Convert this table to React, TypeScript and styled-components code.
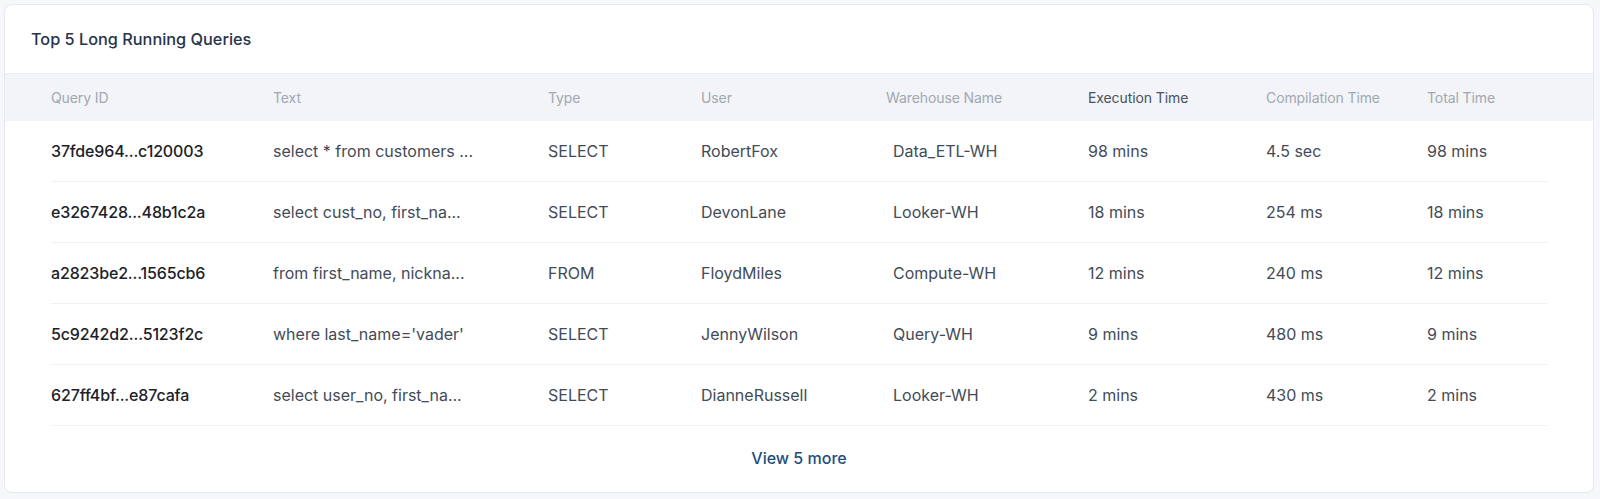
import styled, { createGlobalStyle } from "styled-components";

const GlobalStyle = createGlobalStyle`
  html, body {
    margin: 0;
    padding: 0;
    background: #f6f7fb;
    font-family: Inter, "Noto Sans", sans-serif;
  }
`;

const Page = styled.div`
  padding: 4px 6px 9px 4px;
`;

const Card = styled.section`
  background: #ffffff;
  border: 1px solid #e6e9f0;
  border-radius: 8px;
  overflow: hidden;
`;

const CardHeader = styled.header`
  height: 68px;
  display: flex;
  align-items: center;
  padding: 0 26px;
  border-bottom: 1px solid #eceef3;
`;

const Title = styled.h2`
  margin: 0;
  font-size: 16.3px;
  font-weight: 500;
  color: #27344a;
`;

const columns = "222px 275px 153px 185px 202px 178px 161px 1fr";

const HeadRow = styled.div`
  display: grid;
  grid-template-columns: ${columns};
  align-items: center;
  height: 47px;
  padding: 0 45px 0 46px;
  background: #f2f4f7;
`;

const HeadCell = styled.div<{ $active?: boolean }>`
  font-size: 14px;
  color: ${(p) => (p.$active ? "#4a5261" : "#a1a8b3")};
  letter-spacing: -0.1px;
`;

const Row = styled.div`
  display: grid;
  grid-template-columns: ${columns};
  align-items: center;
  height: 60px;
  margin: 0 45px 0 46px;
  border-bottom: 1px solid #eff1f4;
`;

const Cell = styled.div<{ $strong?: boolean; $shift?: boolean }>`
  font-size: 16px;
  font-weight: ${(p) => (p.$strong ? 500 : 400)};
  color: ${(p) => (p.$strong ? "#1c2129" : "#434b58")};
  padding-left: ${(p) => (p.$shift ? "7px" : "0")};
  letter-spacing: ${(p) => (p.$strong ? "-0.15px" : "0")};
  white-space: nowrap;
`;

const Footer = styled.div`
  height: 66px;
  display: flex;
  align-items: center;
  justify-content: center;
  padding-bottom: 2px;
  box-sizing: border-box;
`;

const MoreLink = styled.a`
  font-size: 16px;
  font-weight: 500;
  color: #1d4e7e;
  text-decoration: none;
  cursor: pointer;
`;

type Query = {
  id: string;
  text: string;
  type: string;
  user: string;
  warehouse: string;
  execution: string;
  compilation: string;
  total: string;
};

const queries: Query[] = [
  {
    id: "37fde964...c120003",
    text: "select * from customers ...",
    type: "SELECT",
    user: "RobertFox",
    warehouse: "Data_ETL-WH",
    execution: "98 mins",
    compilation: "4.5 sec",
    total: "98 mins",
  },
  {
    id: "e3267428...48b1c2a",
    text: "select cust_no, first_na...",
    type: "SELECT",
    user: "DevonLane",
    warehouse: "Looker-WH",
    execution: "18 mins",
    compilation: "254 ms",
    total: "18 mins",
  },
  {
    id: "a2823be2...1565cb6",
    text: "from first_name, nickna...",
    type: "FROM",
    user: "FloydMiles",
    warehouse: "Compute-WH",
    execution: "12 mins",
    compilation: "240 ms",
    total: "12 mins",
  },
  {
    id: "5c9242d2...5123f2c",
    text: "where last_name='vader'",
    type: "SELECT",
    user: "JennyWilson",
    warehouse: "Query-WH",
    execution: "9 mins",
    compilation: "480 ms",
    total: "9 mins",
  },
  {
    id: "627ff4bf...e87cafa",
    text: "select user_no, first_na...",
    type: "SELECT",
    user: "DianneRussell",
    warehouse: "Looker-WH",
    execution: "2 mins",
    compilation: "430 ms",
    total: "2 mins",
  },
];

export default function App() {
  return (
    <Page>
      <GlobalStyle />
      <Card>
        <CardHeader>
          <Title>Top 5 Long Running Queries</Title>
        </CardHeader>
        <HeadRow>
          <HeadCell>Query ID</HeadCell>
          <HeadCell>Text</HeadCell>
          <HeadCell>Type</HeadCell>
          <HeadCell>User</HeadCell>
          <HeadCell>Warehouse Name</HeadCell>
          <HeadCell $active>Execution Time</HeadCell>
          <HeadCell>Compilation Time</HeadCell>
          <HeadCell>Total Time</HeadCell>
        </HeadRow>
        {queries.map((q) => (
          <Row key={q.id}>
            <Cell $strong>{q.id}</Cell>
            <Cell>{q.text}</Cell>
            <Cell>{q.type}</Cell>
            <Cell>{q.user}</Cell>
            <Cell $shift>{q.warehouse}</Cell>
            <Cell>{q.execution}</Cell>
            <Cell>{q.compilation}</Cell>
            <Cell>{q.total}</Cell>
          </Row>
        ))}
        <Footer>
          <MoreLink>View 5 more</MoreLink>
        </Footer>
      </Card>
    </Page>
  );
}
